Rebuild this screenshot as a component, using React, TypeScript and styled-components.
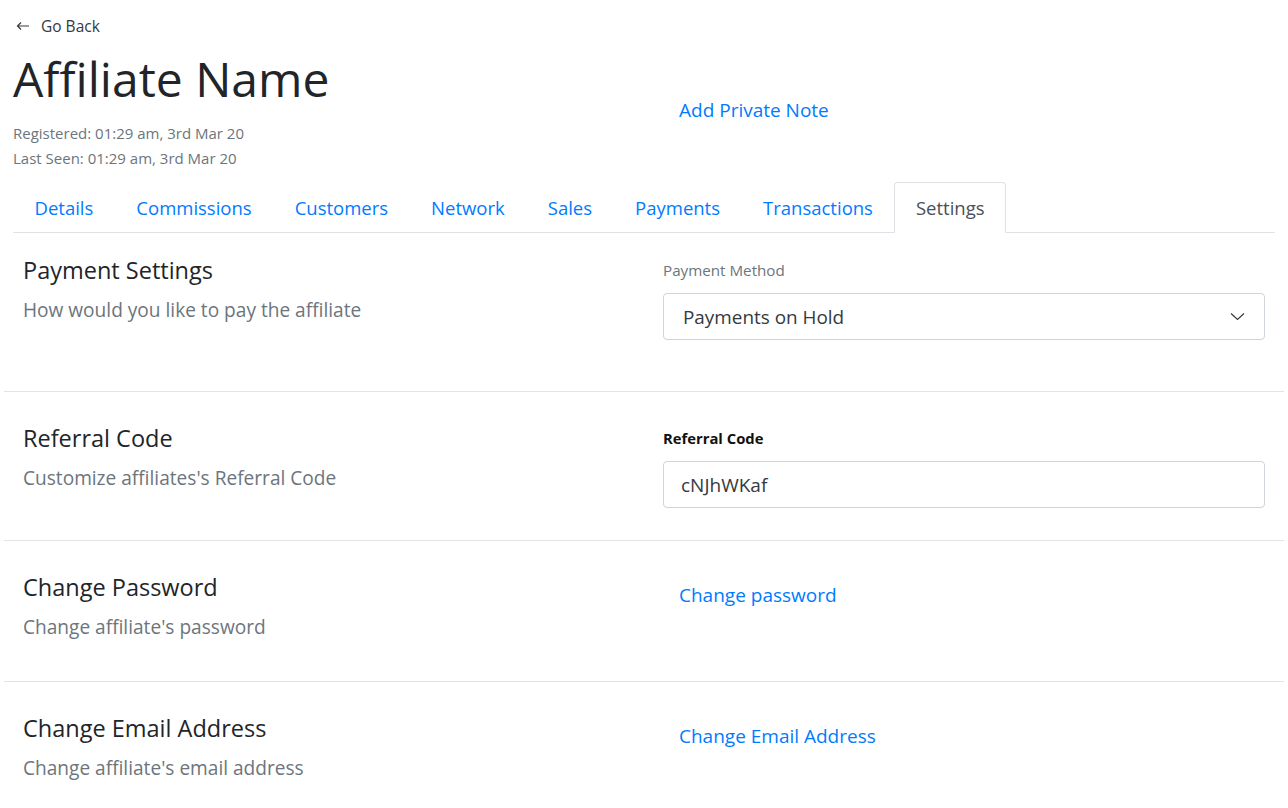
import React from "react";
import styled, { createGlobalStyle } from "styled-components";

const GlobalStyle = createGlobalStyle`
  * { box-sizing: border-box; }
  body {
    margin: 0;
    background: #fff;
    color: #212529;
    font-family: "Open Sans", "Noto Sans", Arial, sans-serif;
  }
`;

const Page = styled.div`
  padding: 14px 4px 0;
`;

const Header = styled.header`
  display: grid;
  grid-template-columns: 650px 1fr;
  padding: 0 9px;
`;

const HeaderMain = styled.div`
  display: flex;
  flex-direction: column;
`;

const BackLink = styled.a`
  display: flex;
  align-items: center;
  gap: 11px;
  padding-left: 3px;
  height: 24px;
  font-size: 15.5px;
  color: #343a40;
  text-decoration: none;
  cursor: pointer;
`;

const Title = styled.h1`
  margin: 12px 0 0;
  font-size: 48px;
  font-weight: 400;
  line-height: 58px;
  color: #212529;
`;

const Meta = styled.div<{ $first?: boolean }>`
  margin-top: ${(p) => (p.$first ? "13px" : "0")};
  font-size: 15px;
  line-height: 25px;
  color: #6c757d;
`;

const HeaderAside = styled.div`
  padding-top: 74px;
`;

const LinkButton = styled.a`
  display: inline-block;
  padding: 8px 16px;
  font-size: 19px;
  line-height: 28px;
  color: #007bff;
  text-decoration: none;
  cursor: pointer;
`;

const Tabs = styled.nav`
  display: flex;
  margin: 11px 9px 0;
  border-bottom: 1px solid #dee2e6;
`;

const Tab = styled.a<{ $active?: boolean }>`
  display: flex;
  align-items: center;
  height: 51px;
  padding: 0 20.5px;
  margin-bottom: -1px;
  font-size: 18.5px;
  text-decoration: none;
  cursor: pointer;
  border: 1px solid transparent;
  border-top-left-radius: 4px;
  border-top-right-radius: 4px;
  color: ${(p) => (p.$active ? "#495057" : "#007bff")};
  background: ${(p) => (p.$active ? "#fff" : "transparent")};
  border-color: ${(p) => (p.$active ? "#dee2e6 #dee2e6 #fff" : "transparent")};
`;

const Section = styled.section<{ $first?: boolean; $last?: boolean }>`
  display: grid;
  grid-template-columns: 1fr 1fr;
  column-gap: 38px;
  padding: ${(p) => (p.$first ? "21px" : "30px")} 19px 32px;
  border-bottom: ${(p) => (p.$last ? "none" : "1px solid #e3e3e3")};
`;

const Intro = styled.div`
  padding-bottom: 8px;
`;

const SectionTitle = styled.h2`
  margin: 0;
  font-size: 23.5px;
  font-weight: 400;
  line-height: 32px;
  color: #212529;
`;

const SectionText = styled.p`
  margin: 10px 0 0;
  font-size: 19.1px;
  line-height: 28px;
  color: #6c757d;
`;

const Field = styled.div<{ $spaced?: boolean }>`
  display: flex;
  flex-direction: column;
  padding-top: 6px;
  margin-bottom: ${(p) => (p.$spaced ? "19px" : "0")};
`;

const Label = styled.label<{ $strong?: boolean }>`
  margin-bottom: 13px;
  font-size: ${(p) => (p.$strong ? "14.8px" : "15.2px")};
  line-height: 20px;
  font-weight: ${(p) => (p.$strong ? 700 : 400)};
  color: ${(p) => (p.$strong ? "#111" : "#6c757d")};
`;

const SelectBox = styled.div`
  display: flex;
  align-items: center;
  justify-content: space-between;
  height: 47px;
  padding: 0 19px 0 19px;
  border: 1px solid #ced4da;
  border-radius: 4px;
  font-size: 18.9px;
  color: #343a40;
`;

const Input = styled.input`
  height: 47px;
  padding: 0 17px;
  border: 1px solid #ced4da;
  border-radius: 4px;
  font-family: inherit;
  font-size: 19px;
  color: #343a40;
  outline: none;
`;

const ActionCell = styled.div`
  padding-top: 2px;
`;

const ArrowLeft = () => (
  <svg width="14" height="10" viewBox="0 0 14 10" fill="none" stroke="#343a40" strokeWidth="1.2">
    <path d="M13 5H1.5M5 1.5L1.5 5L5 8.5" />
  </svg>
);

const Chevron = () => (
  <svg width="15" height="9" viewBox="0 0 15 9" fill="none" stroke="#343a40" strokeWidth="1.2">
    <path d="M1 1.5l6.5 6 6.5-6" />
  </svg>
);

const tabs = ["Details", "Commissions", "Customers", "Network", "Sales", "Payments", "Transactions", "Settings"];

export default function App() {
  return (
    <>
      <GlobalStyle />
      <Page>
        <Header>
          <HeaderMain>
            <BackLink>
              <ArrowLeft />
              Go Back
            </BackLink>
            <Title>Affiliate Name</Title>
            <Meta $first>Registered: 01:29 am, 3rd Mar 20</Meta>
            <Meta>Last Seen: 01:29 am, 3rd Mar 20</Meta>
          </HeaderMain>
          <HeaderAside>
            <LinkButton>Add Private Note</LinkButton>
          </HeaderAside>
        </Header>
        <Tabs>
          {tabs.map((t) => (
            <Tab key={t} $active={t === "Settings"}>
              {t}
            </Tab>
          ))}
        </Tabs>
        <Section $first>
          <Intro>
            <SectionTitle>Payment Settings</SectionTitle>
            <SectionText>How would you like to pay the affiliate</SectionText>
          </Intro>
          <Field $spaced>
            <Label>Payment Method</Label>
            <SelectBox>
              <span>Payments on Hold</span>
              <Chevron />
            </SelectBox>
          </Field>
        </Section>
        <Section>
          <Intro>
            <SectionTitle>Referral Code</SectionTitle>
            <SectionText>Customize affiliates's Referral Code</SectionText>
          </Intro>
          <Field>
            <Label $strong>Referral Code</Label>
            <Input defaultValue="cNJhWKaf" />
          </Field>
        </Section>
        <Section>
          <Intro>
            <SectionTitle>Change Password</SectionTitle>
            <SectionText>Change affiliate's password</SectionText>
          </Intro>
          <ActionCell>
            <LinkButton>Change password</LinkButton>
          </ActionCell>
        </Section>
        <Section $last>
          <Intro>
            <SectionTitle>Change Email Address</SectionTitle>
            <SectionText>Change affiliate's email address</SectionText>
          </Intro>
          <ActionCell>
            <LinkButton>Change Email Address</LinkButton>
          </ActionCell>
        </Section>
      </Page>
    </>
  );
}
